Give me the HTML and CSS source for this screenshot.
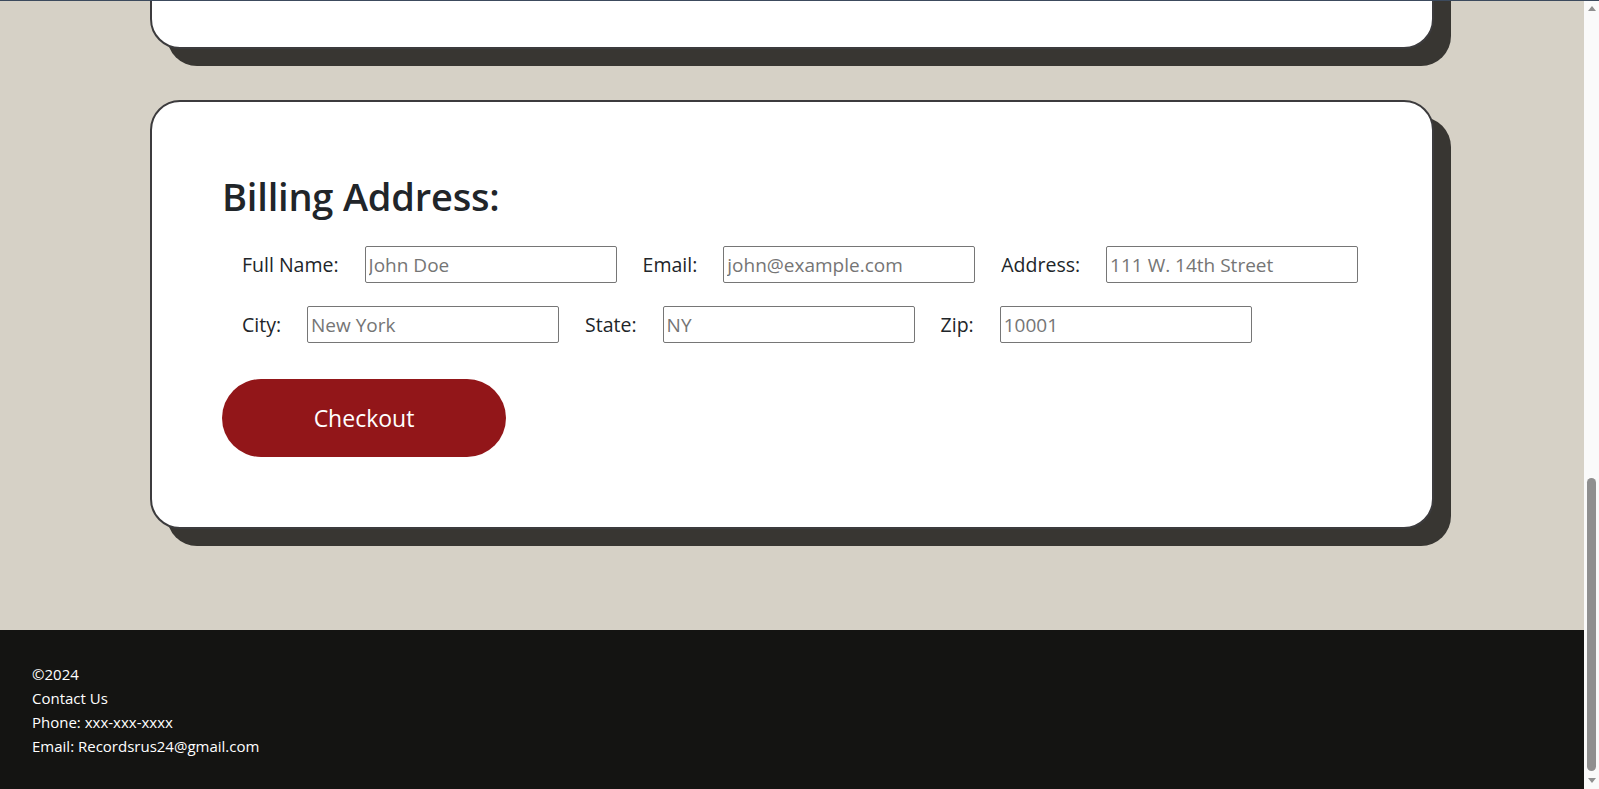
FILE: index.html
```html
<!DOCTYPE html>
<html lang="en">
<head>
<meta charset="utf-8">
<title>Checkout - Records R Us</title>
<link rel="stylesheet" href="styles.css">
</head>
<body>
<div class="topline"></div>
<div class="scroller">
  <div class="page">
    <main class="content">
      <section class="card cart-card"></section>
      <section class="card billing-card">
        <h1 class="billing-title">Billing Address:</h1>
        <form class="billing-form">
          <div class="form-row">
            <div class="field">
              <label for="fname">Full Name:</label>
              <input id="fname" type="text" placeholder="John Doe">
            </div>
            <div class="field">
              <label for="email">Email:</label>
              <input id="email" type="text" placeholder="john@example.com">
            </div>
            <div class="field">
              <label for="adr">Address:</label>
              <input id="adr" type="text" placeholder="111 W. 14th Street">
            </div>
          </div>
          <div class="form-row">
            <div class="field">
              <label for="city">City:</label>
              <input id="city" type="text" placeholder="New York">
            </div>
            <div class="field">
              <label for="state">State:</label>
              <input id="state" type="text" placeholder="NY">
            </div>
            <div class="field">
              <label for="zip">Zip:</label>
              <input id="zip" type="text" placeholder="10001">
            </div>
          </div>
          <button type="button" class="checkout-btn">Checkout</button>
        </form>
      </section>
    </main>
    <footer class="site-footer">
      <div>©2024</div>
      <div>Contact Us</div>
      <div>Phone: xxx-xxx-xxxx</div>
      <div>Email: Recordsrus24@gmail.com</div>
    </footer>
  </div>
</div>
<div class="rail" aria-hidden="true">
  <div class="rail-btn"><span class="arrow-up"></span></div>
  <div class="rail-track"><div class="rail-thumb"></div></div>
  <div class="rail-btn"><span class="arrow-down"></span></div>
</div>
</body>
</html>
```

FILE: styles.css
```css
html, body {
  margin: 0;
  padding: 0;
  height: 100%;
  overflow: hidden;
}

body {
  display: flex;
  font-family: "Open Sans", "Noto Sans", sans-serif;
  color: #212529;
  background: #d6d1c6;
}

.topline {
  position: fixed;
  top: 0;
  left: 0;
  right: 0;
  height: 1px;
  background: #3c4a5d;
  z-index: 10;
}

.scroller {
  flex: 1;
  min-width: 0;
  height: 100vh;
  overflow-y: auto;
  display: flex;
  flex-direction: column-reverse;
}

.rail {
  width: 15px;
  flex-shrink: 0;
  height: 100vh;
  background: #fafafa;
  display: flex;
  flex-direction: column;
}

.rail-btn {
  height: 15px;
  flex-shrink: 0;
  display: flex;
  align-items: center;
  justify-content: center;
}

.arrow-up {
  width: 0;
  height: 0;
  border-left: 4.5px solid transparent;
  border-right: 4.5px solid transparent;
  border-bottom: 5px solid #8f8f8f;
  margin-top: 2px;
}

.arrow-down {
  width: 0;
  height: 0;
  border-left: 4.5px solid transparent;
  border-right: 4.5px solid transparent;
  border-top: 5px solid #8f8f8f;
  margin-bottom: 2px;
}

.rail-track {
  flex: 1;
  display: flex;
  flex-direction: column;
  justify-content: flex-end;
  align-items: center;
  padding-bottom: 3px;
}

.rail-thumb {
  width: 9px;
  height: 293px;
  border-radius: 5px;
  background: #8f8f8f;
}

.page {
  flex-shrink: 0;
}

.content {
  padding: 50px 150px 101px;
  display: flex;
  flex-direction: column;
  gap: 51px;
}

.card {
  background: #fff;
  border: 2px solid #3c3b3d;
  border-radius: 30px;
  box-shadow: 17px 17px 0 #383632;
}

.cart-card {
  height: 1254px;
  box-sizing: border-box;
}

.billing-card {
  padding: 70px;
}

.billing-title {
  margin: 0 0 26px;
  font-size: 38px;
  line-height: 48px;
  font-weight: 600;
  letter-spacing: -0.2px;
}

.billing-form {
  display: flex;
  flex-direction: column;
  align-items: flex-start;
}

.form-row {
  display: flex;
  align-items: center;
  gap: 26px;
  padding-left: 20px;
  margin-bottom: 23px;
}

.form-row + .form-row {
  margin-bottom: 36px;
}

.field {
  display: flex;
  align-items: center;
  gap: 26px;
}

.field label {
  font-size: 19.5px;
  line-height: 26px;
}

.field input {
  box-sizing: border-box;
  width: 252px;
  height: 37px;
  padding: 0 3px;
  border: 1px solid #767676;
  border-radius: 2px;
  font-family: inherit;
  font-size: 19px;
  color: #212529;
  background: #fff;
}

.field input::placeholder {
  color: #757575;
}

.checkout-btn {
  width: 284px;
  height: 78px;
  border: none;
  border-radius: 39px;
  background: #921619;
  color: #fff;
  font-family: inherit;
  font-size: 23px;
  cursor: pointer;
}

.site-footer {
  background: #141412;
  color: #fff;
  padding: 32px;
  height: 159px;
  box-sizing: border-box;
  font-size: 15px;
  line-height: 24px;
}
```
